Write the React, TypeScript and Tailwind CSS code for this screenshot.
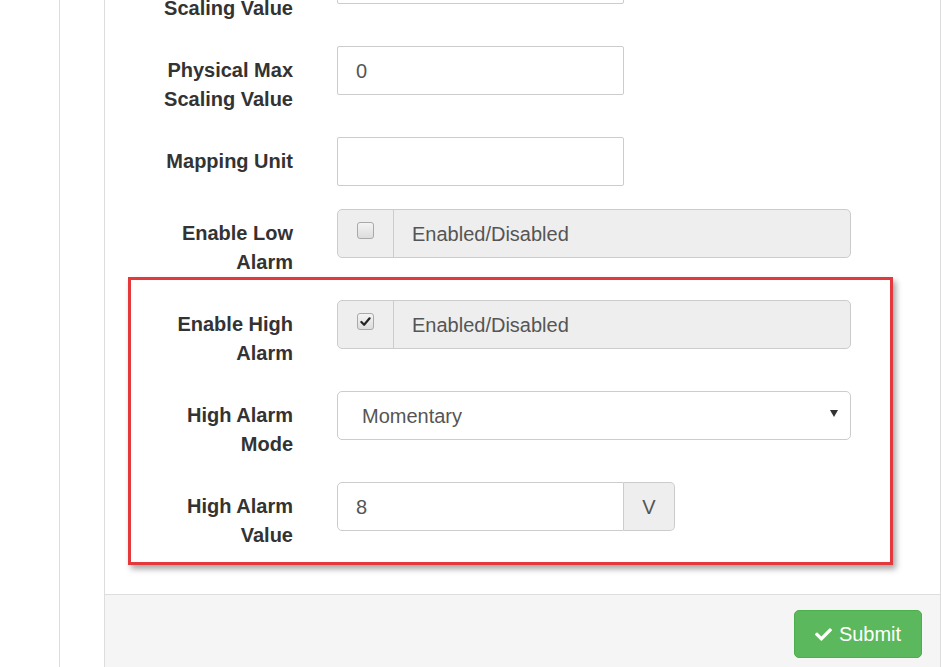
import React from "react";
import { FaCheck } from "react-icons/fa";

function Label({ lines }: { lines: string[] }) {
  return (
    <div className="w-[188px] shrink-0 pt-[10px] text-right text-[20px] font-bold leading-[29px] text-[#333]">
      {lines.map((l, i) => (
        <div key={i}>{l}</div>
      ))}
    </div>
  );
}

function Row({ lines, children, className = "" }: { lines: string[]; children: React.ReactNode; className?: string }) {
  return (
    <div className={"flex items-start mb-[23px] " + className}>
      <Label lines={lines} />
      <div className="ml-[44px]">{children}</div>
    </div>
  );
}

function TextInput({ value }: { value: string }) {
  return (
    <div className="w-[287px] h-[49px] border border-[#ccc] rounded-[2px] bg-white flex items-center pl-[18px] text-[20px] text-[#555]">
      {value}
    </div>
  );
}

function CheckBox({ checked }: { checked: boolean }) {
  return (
    <div className="w-[17px] h-[17px] rounded-[3px] border border-[#a9a9a9] bg-gradient-to-b from-[#f4f4f4] to-[#dcdcdc] flex items-center justify-center -mt-[6px]">
      {checked && (
        <svg width="11" height="11" viewBox="0 0 12 12">
          <path d="M1.5 6.5 L4.5 9.5 L10.5 2.5" fill="none" stroke="#222" strokeWidth="2.4" strokeLinecap="round" strokeLinejoin="round" />
        </svg>
      )}
    </div>
  );
}

function CheckGroup({ checked }: { checked: boolean }) {
  return (
    <div className="w-[514px] h-[49px] border border-[#ccc] rounded-[5px] bg-[#eee] flex">
      <div className="w-[56px] h-full border-r border-[#ccc] flex items-center justify-center">
        <CheckBox checked={checked} />
      </div>
      <div className="flex items-center pl-[18px] text-[20px] text-[#555]">Enabled/Disabled</div>
    </div>
  );
}

export default function App() {
  return (
    <div className="relative w-[943px] h-[667px] overflow-hidden bg-white flex font-['Liberation_Sans',Arial,sans-serif]">
      <div className="w-[60px] shrink-0 border-r border-[#ddd]" />
      <div className="w-[44px] shrink-0" />
      <div className="w-[837px] shrink-0 border-l border-r border-[#ddd] flex flex-col">
        <div className="pb-[21px]">
          <Row lines={["Physical Min", "Scaling Value"]} className="-mt-[45px]">
            <TextInput value="" />
          </Row>
          <Row lines={["Physical Max", "Scaling Value"]}>
            <TextInput value="0" />
          </Row>
          <Row lines={["Mapping Unit"]}>
            <TextInput value="" />
          </Row>
          <Row lines={["Enable Low", "Alarm"]}>
            <CheckGroup checked={false} />
          </Row>
          <div className="relative">
            <Row lines={["Enable High", "Alarm"]}>
              <CheckGroup checked={true} />
            </Row>
            <Row lines={["High Alarm", "Mode"]}>
              <div className="w-[514px] h-[49px] border border-[#ccc] rounded-[5px] bg-white flex items-center justify-between pl-[24px] pr-[12px] text-[20px] text-[#555]">
                <span>Momentary</span>
                <svg width="8" height="7" viewBox="0 0 8 7" className="-mt-[4px]">
                  <path d="M0 0 H8 L4 7 Z" fill="#333" />
                </svg>
              </div>
            </Row>
            <Row lines={["High Alarm", "Value"]}>
              <div className="w-[338px] h-[49px] flex">
                <div className="w-[287px] h-full border border-[#ccc] rounded-l-[5px] bg-white flex items-center pl-[18px] text-[20px] text-[#555]">
                  8
                </div>
                <div className="flex-1 h-full border border-l-0 border-[#ccc] rounded-r-[5px] bg-[#eee] flex items-center justify-center text-[20px] text-[#555]">
                  V
                </div>
              </div>
            </Row>
            <div className="absolute left-[23px] -top-[23px] w-[765px] h-[288px] border-[3px] border-[#e4393c] shadow-[3px_4px_6px_rgba(0,0,0,0.35)] pointer-events-none" />
          </div>
        </div>
        <div className="border-t border-[#ddd] bg-[#f5f5f5] h-[90px] flex justify-end pt-[15px] pr-[18px]">
          <button className="w-[128px] h-[48px] rounded-[5px] bg-[#5cb85c] border border-[#4cae4c] text-white text-[20px] flex items-center justify-center gap-[7px]">
            <FaCheck className="w-[17px] h-[17px]" />
            <span>Submit</span>
          </button>
        </div>
      </div>
    </div>
  );
}
